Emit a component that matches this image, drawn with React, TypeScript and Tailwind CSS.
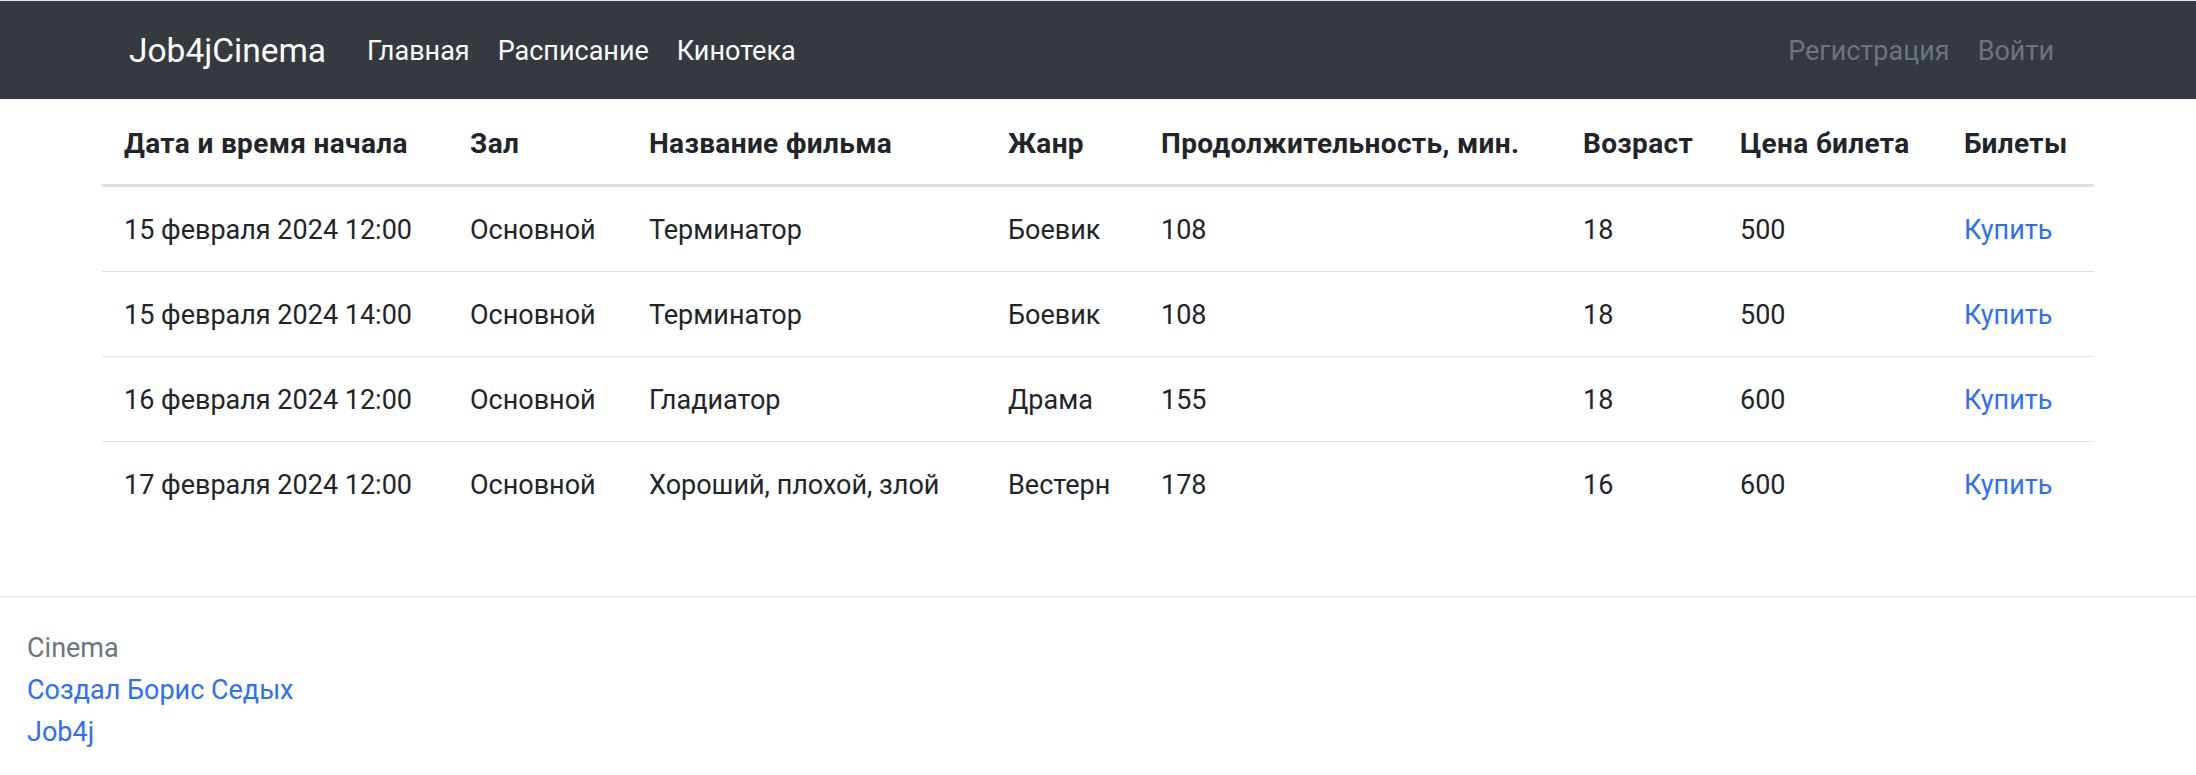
import React from "react"

const rows = [
    { date: "15 февраля 2024 12:00", hall: "Основной", film: "Терминатор", genre: "Боевик", duration: "108", age: "18", price: "500" },
    { date: "15 февраля 2024 14:00", hall: "Основной", film: "Терминатор", genre: "Боевик", duration: "108", age: "18", price: "500" },
    { date: "16 февраля 2024 12:00", hall: "Основной", film: "Гладиатор", genre: "Драма", duration: "155", age: "18", price: "600" },
    { date: "17 февраля 2024 12:00", hall: "Основной", film: "Хороший, плохой, злой", genre: "Вестерн", duration: "178", age: "16", price: "600" },
]

const headers = ["Дата и время начала", "Зал", "Название фильма", "Жанр", "Продолжительность, мин.", "Возраст", "Цена билета", "Билеты"]

// column template shared by header and rows
const cols = "grid grid-cols-[346px_179px_359px_153px_422px_157px_224px_154px] items-center"

function Navbar() {
    return <nav className="bg-[#343a40] h-[99px] border-t border-[#e4e4e4] flex items-center pt-[2px] pl-[129px] pr-[128px] text-[27px]">
        <a className="text-white text-[33.5px] w-[224px] whitespace-nowrap">Job4jCinema</a>
        <div className="flex">
            <a className="text-white px-[14px]">Главная</a>
            <a className="text-white px-[14px]">Расписание</a>
            <a className="text-white px-[14px]">Кинотека</a>
        </div>
        <div className="flex ml-auto">
            <a className="text-[#6c757d] px-[14px]">Регистрация</a>
            <a className="text-[#6c757d] px-[14px]">Войти</a>
        </div>
    </nav>
}

export default function App() {
    return <div className="min-h-[775px] bg-white text-[#212529] text-[27px] leading-[42px]" style={{ fontFamily: 'Roboto, "Noto Sans", sans-serif' }}>
        <Navbar />
        <div className="mx-[102px]">
            <div className={`${cols} h-[88px] pt-[5px] border-b-[3px] border-[#dee2e6] font-bold text-[28px] tracking-[0.35px]`}>
                {headers.map(h => (
                    <div key={h} className="px-[22px] whitespace-nowrap">{h}</div>
                ))}
            </div>
            {rows.map((r, idx) => (
                <div key={idx} className={`${cols} pt-[2px] ${idx < rows.length - 1 ? "h-[85px] border-b border-[#dee2e6]" : "h-[84px]"}`}>
                    <div className="px-[22px] whitespace-nowrap">{r.date}</div>
                    <div className="px-[22px] whitespace-nowrap">{r.hall}</div>
                    <div className="px-[22px] whitespace-nowrap">{r.film}</div>
                    <div className="px-[22px] whitespace-nowrap">{r.genre}</div>
                    <div className="px-[22px]">{r.duration}</div>
                    <div className="px-[22px]">{r.age}</div>
                    <div className="px-[22px]">{r.price}</div>
                    <div className="px-[22px]"><a className="text-[#2d6ff7]">Купить</a></div>
                </div>
            ))}
        </div>
        <footer className="mt-[70px] border-t border-[#dee2e6] pt-[30px] px-[27px]">
            <div className="text-[#6c757d]">Cinema</div>
            <div><a className="text-[#2d6ff7]">Создал Борис Седых</a></div>
            <div><a className="text-[#2d6ff7]">Job4j</a></div>
        </footer>
    </div>
}
